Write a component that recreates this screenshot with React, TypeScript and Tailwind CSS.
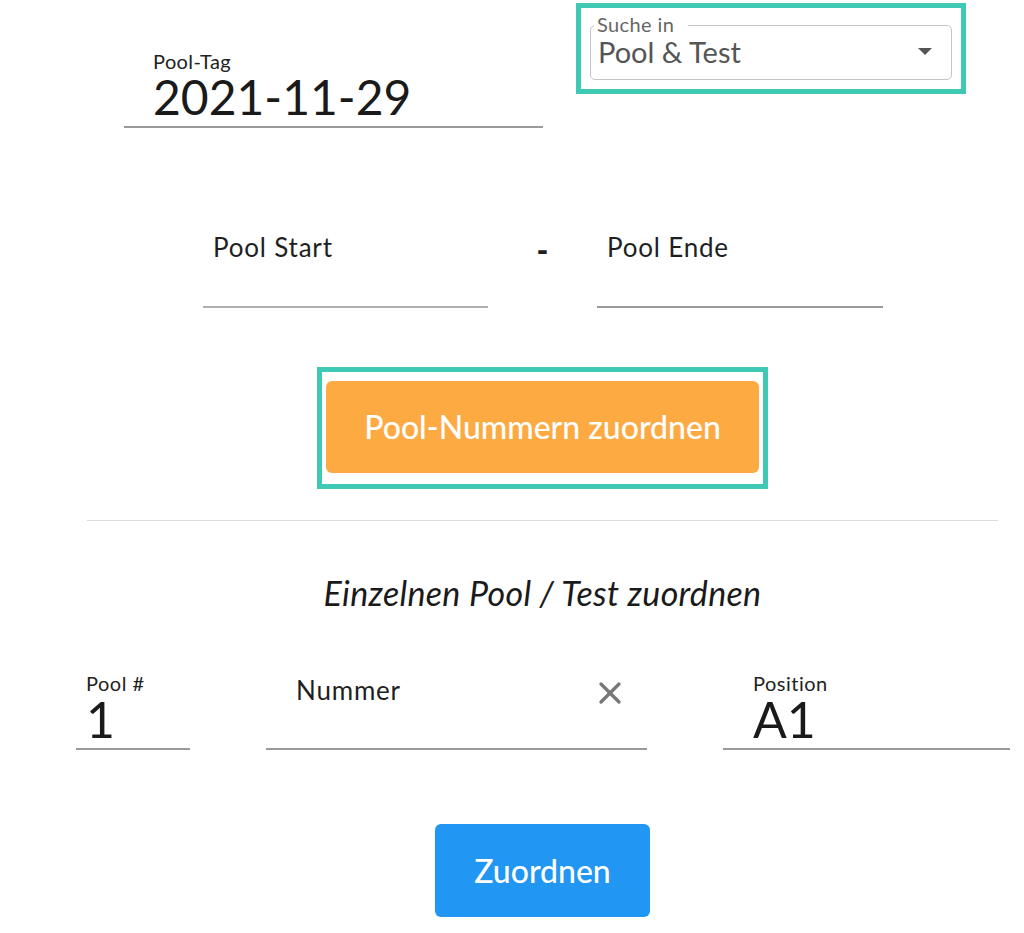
import { X } from 'lucide-react'

function LineField({
  label,
  value,
  width,
  padLeft,
}: {
  label: string
  value: string
  width: string
  padLeft: string
}) {
  return (
    <div className={`${width} h-[78px] flex flex-col border-b-2 border-[#9a9a9a] ${padLeft}`}>
      <span className="text-[20px] leading-[22px] tracking-[0.5px] text-[#222]">{label}</span>
      <span className="text-[50px] leading-[50px] text-[#1a1a1a]">{value}</span>
    </div>
  )
}

export default function App() {
  return (
    <div className="w-[1024px] h-[933px] bg-white overflow-hidden font-['Lato','Liberation_Sans',sans-serif] text-[#1f1f1f]">
      {/* Top row: date + search select */}
      <div className="flex items-start">
        <div className="ml-[124px] mt-[50px] w-[419px] pl-[29px] pb-[4px] border-b-2 border-[#9a9a9a] flex flex-col">
          <span className="text-[20px] leading-[22px] tracking-[0.4px] text-[#222]">Pool-Tag</span>
          <span className="text-[48px] leading-[50px] text-[#1a1a1a]">2021-11-29</span>
        </div>
        <div className="ml-[33px] mt-[3px] w-[390px] h-[91px] border-[5px] border-[#3fc9b4] px-[9px] pt-[17px]">
          <div className="relative h-[55px] rounded-[5px] border border-[#c4c4c4]">
            <span className="absolute -top-[13px] left-[3px] bg-white pl-[3px] pr-[14px] text-[20px] leading-[22px] tracking-[0.4px] text-[#666]">
              Suche in
            </span>
            <div className="pl-[7px] pt-[9px] text-[29px] leading-[34px] text-[#555]">Pool &amp; Test</div>
            <span className="absolute right-[19px] top-[22px] w-0 h-0 border-l-[7px] border-r-[7px] border-t-[7px] border-l-transparent border-r-transparent border-t-[#555]" />
          </div>
        </div>
      </div>

      {/* Pool range */}
      <div className="mt-[101px] ml-[203px] flex items-start">
        <div className="w-[285px] h-[79px] pl-[10px] pt-[3px] border-b-2 border-[#b0b0b0]">
          <span className="text-[26px] leading-[30px] tracking-[0.8px]">Pool Start</span>
        </div>
        <div className="w-[109px] flex justify-center pt-[6px]">
          <span className="text-[32px] leading-[30px] font-black">-</span>
        </div>
        <div className="w-[286px] h-[79px] pl-[10px] pt-[3px] border-b-2 border-[#9a9a9a]">
          <span className="text-[26px] leading-[30px] tracking-[0.8px]">Pool Ende</span>
        </div>
      </div>

      <div className="ml-[87px] w-[911px] flex flex-col items-center">
        <div className="mt-[59px] w-[451px] h-[122px] border-[5px] border-[#3fc9b4] px-[4px] pt-[9px]">
          <button className="w-full h-[92px] rounded-[6px] bg-[#fdaa43] text-white text-[32px] font-medium">
            Pool-Nummern zuordnen
          </button>
        </div>

        <div className="mt-[31px] w-full h-px bg-[#dcdcdc]" />

        <h2 className="mt-[52px] text-[34px] leading-[40px] tracking-[0.3px] italic text-[#1a1a1a]">
          Einzelnen Pool / Test zuordnen
        </h2>
      </div>

      {/* Single assignment row */}
      <div className="mt-[59px] ml-[76px] flex items-start gap-[76px]">
        <LineField label="Pool #" value="1" width="w-[114px]" padLeft="pl-[10px]" />
        <div className="relative w-[381px] h-[78px] pl-[30px] border-b-2 border-[#9a9a9a]">
          <span className="block mt-[3px] text-[26px] leading-[30px] tracking-[0.8px]">Nummer</span>
          <X className="absolute right-[19px] top-[3px] text-[#777]" size={36} strokeWidth={2.2} />
        </div>
        <LineField label="Position" value="A1" width="w-[287px]" padLeft="pl-[30px]" />
      </div>

      <div className="ml-[87px] w-[911px] flex justify-center">
        <button className="mt-[74px] w-[215px] h-[93px] rounded-[6px] bg-[#2196f3] text-white text-[32px] font-medium">
          Zuordnen
        </button>
      </div>
    </div>
  )
}
